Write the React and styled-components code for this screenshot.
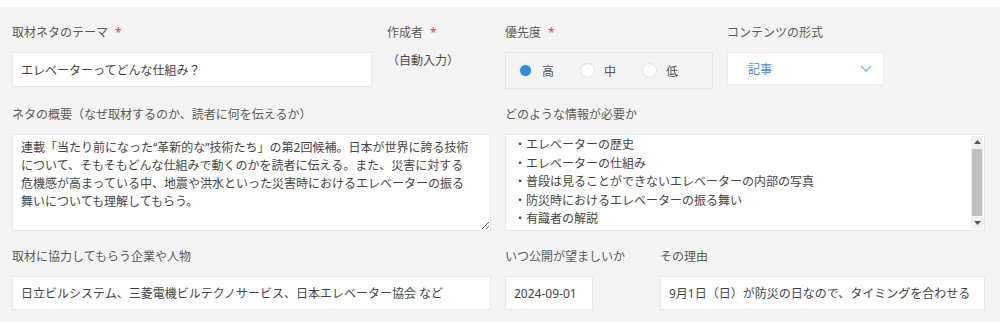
import React from 'react';
import styled, { createGlobalStyle } from 'styled-components';

const GlobalStyle = createGlobalStyle`
  html, body {
    margin: 0;
    padding: 0;
    background: #fff;
  }
  body {
    font-family: "Noto Sans", "Noto Sans CJK JP", sans-serif;
  }
`;

const overview = [
  '連載「当たり前になった“革新的な”技術たち」の第2回候補。日本が世界に誇る技術',
  'について、そもそもどんな仕組みで動くのかを読者に伝える。また、災害に対する',
  '危機感が高まっている中、地震や洪水といった災害時におけるエレベーターの振る',
  '舞いについても理解してもらう。',
].join('\n');

const needs = [
  '・エレベーターの歴史',
  '・エレベーターの仕組み',
  '・普段は見ることができないエレベーターの内部の写真',
  '・防災時におけるエレベーターの振る舞い',
  '・有識者の解説',
];

const priorities = [
  { label: '高', checked: true },
  { label: '中', checked: false },
  { label: '低', checked: false },
];

const App = () => {
  return (
    <>
      <GlobalStyle />
      <Page>
        <Row>
          <Group $gap={15}>
            <Field $w={360}>
              <Label>
                取材ネタのテーマ<Required>*</Required>
              </Label>
              <TextBox readOnly value="エレベーターってどんな仕組み？" />
            </Field>
            <Field>
              <Label>
                作成者<Required>*</Required>
              </Label>
              <StaticText>（自動入力）</StaticText>
            </Field>
          </Group>
          <Group $gap={14}>
            <Field $w={208}>
              <Label>
                優先度<Required>*</Required>
              </Label>
              <RadioBox>
                {priorities.map((p) => (
                  <RadioOption key={p.label}>
                    <RadioDot $checked={p.checked} />
                    {p.label}
                  </RadioOption>
                ))}
              </RadioBox>
            </Field>
            <Field $w={157}>
              <Label>コンテンツの形式</Label>
              <Select>
                記事
                <svg width="12" height="7" viewBox="0 0 12 7">
                  <polyline
                    points="1,1 6,6 11,1"
                    fill="none"
                    stroke="#8cbbe6"
                    strokeWidth="1.5"
                  />
                </svg>
              </Select>
            </Field>
          </Group>
        </Row>

        <Row>
          <Field>
            <Label>ネタの概要（なぜ取材するのか、読者に何を伝えるか）</Label>
            <TextArea readOnly wrap="off" value={overview} />
          </Field>
          <Field>
            <Label>どのような情報が必要か</Label>
            <ListBox>
              <ListBody>
                {needs.map((n) => (
                  <div key={n}>{n}</div>
                ))}
              </ListBody>
              <ScrollBar>
                <ScrollArrow>
                  <svg width="7" height="4" viewBox="0 0 7 4">
                    <polygon points="0,4 3.5,0 7,4" fill="#5a5a5a" />
                  </svg>
                </ScrollArrow>
                <ScrollTrack>
                  <Thumb />
                </ScrollTrack>
                <ScrollArrow>
                  <svg width="7" height="4" viewBox="0 0 7 4">
                    <polygon points="0,0 3.5,4 7,0" fill="#5a5a5a" />
                  </svg>
                </ScrollArrow>
              </ScrollBar>
            </ListBox>
          </Field>
        </Row>

        <Row>
          <Field>
            <Label>取材に協力してもらう企業や人物</Label>
            <TextBox
              $h={34}
              readOnly
              value="日立ビルシステム、三菱電機ビルテクノサービス、日本エレベーター協会 など"
            />
          </Field>
          <Group $gap={67}>
            <Field $w={88}>
              <Label>いつ公開が望ましいか</Label>
              <TextBox $h={34} readOnly value="2024-09-01" />
            </Field>
            <Field $w={325}>
              <Label>その理由</Label>
              <TextBox
                $h={34}
                readOnly
                value="9月1日（日）が防災の日なので、タイミングを合わせる"
              />
            </Field>
          </Group>
        </Row>
      </Page>
    </>
  );
};

export default App;

const Page = styled.div`
  margin-top: 7px;
  min-height: 315px;
  box-sizing: border-box;
  background: #f4f4f4;
  padding: 17px 15px 0 12px;
  display: flex;
  flex-direction: column;
  gap: 17px;
`;

const Row = styled.div`
  display: grid;
  grid-template-columns: 479px 480px;
  column-gap: 14px;
`;

const Group = styled.div`
  display: flex;
  align-items: flex-start;
  gap: ${(p) => p.$gap}px;
`;

const Field = styled.div`
  display: flex;
  flex-direction: column;
  min-width: 0;
  width: ${(p) => (p.$w ? `${p.$w}px` : 'auto')};
  flex: ${(p) => (p.$w ? 'none' : '1')};
`;

const Label = styled.div`
  font-size: 12px;
  line-height: 18px;
  color: #5a5a5a;
  margin-bottom: 10px;
  white-space: nowrap;
`;

const Required = styled.span`
  color: #e8473c;
  margin-left: 7px;
`;

const TextBox = styled.input`
  width: 100%;
  height: ${(p) => p.$h || 35}px;
  box-sizing: border-box;
  margin: 0;
  padding: 0 8px;
  border: 1px solid #e8e8e8;
  border-radius: 0;
  background: #fff;
  font-family: inherit;
  font-size: 12px;
  color: #444;
  outline: none;
`;

const StaticText = styled.div`
  font-size: 12px;
  line-height: 18px;
  color: #4a4a4a;
`;

const RadioBox = styled.div`
  height: 37px;
  box-sizing: border-box;
  border: 1px solid #e6e6e6;
  display: flex;
  align-items: center;
  padding-left: 12px;
  gap: 26px;
`;

const RadioOption = styled.label`
  display: flex;
  align-items: center;
  gap: 9px;
  font-size: 12px;
  color: #555;
`;

const RadioDot = styled.span`
  width: 15px;
  height: 15px;
  box-sizing: border-box;
  border-radius: 50%;
  background: ${(p) => (p.$checked ? '#2e8edb' : '#fff')};
  border: ${(p) => (p.$checked ? '2px solid #e4effa' : '1px solid #e3e3e3')};
`;

const Select = styled.div`
  height: 33px;
  box-sizing: border-box;
  background: #fff;
  border: 1px solid #ececec;
  display: flex;
  align-items: center;
  justify-content: space-between;
  padding: 0 11px 0 20px;
  font-size: 12px;
  color: #3a8fdf;
`;

const TextArea = styled.textarea`
  width: 100%;
  height: 97px;
  box-sizing: border-box;
  margin: 0;
  padding: 4px 8px;
  border: 1px solid #e8e8e8;
  border-radius: 0;
  background: #fff;
  font-family: inherit;
  font-size: 12px;
  line-height: 18px;
  color: #444;
  white-space: pre;
  overflow: hidden;
  resize: vertical;
  outline: none;
`;

const ListBox = styled.div`
  height: 97px;
  box-sizing: border-box;
  border: 1px solid #e8e8e8;
  background: #fff;
  display: flex;
`;

const ListBody = styled.div`
  flex: 1;
  overflow: hidden;
  padding: 1px 8px 0;
  font-size: 12px;
  line-height: 18.5px;
  color: #444;
  white-space: nowrap;
`;

const ScrollBar = styled.div`
  width: 12px;
  margin: 1px 1px 1px 0;
  display: flex;
  flex-direction: column;
  background: #f1f1f1;
`;

const ScrollArrow = styled.div`
  height: 13px;
  display: flex;
  align-items: center;
  justify-content: center;
`;

const ScrollTrack = styled.div`
  flex: 1;
  padding: 1px 1px;
`;

const Thumb = styled.div`
  height: 67px;
  background: #c1c1c1;
`;
